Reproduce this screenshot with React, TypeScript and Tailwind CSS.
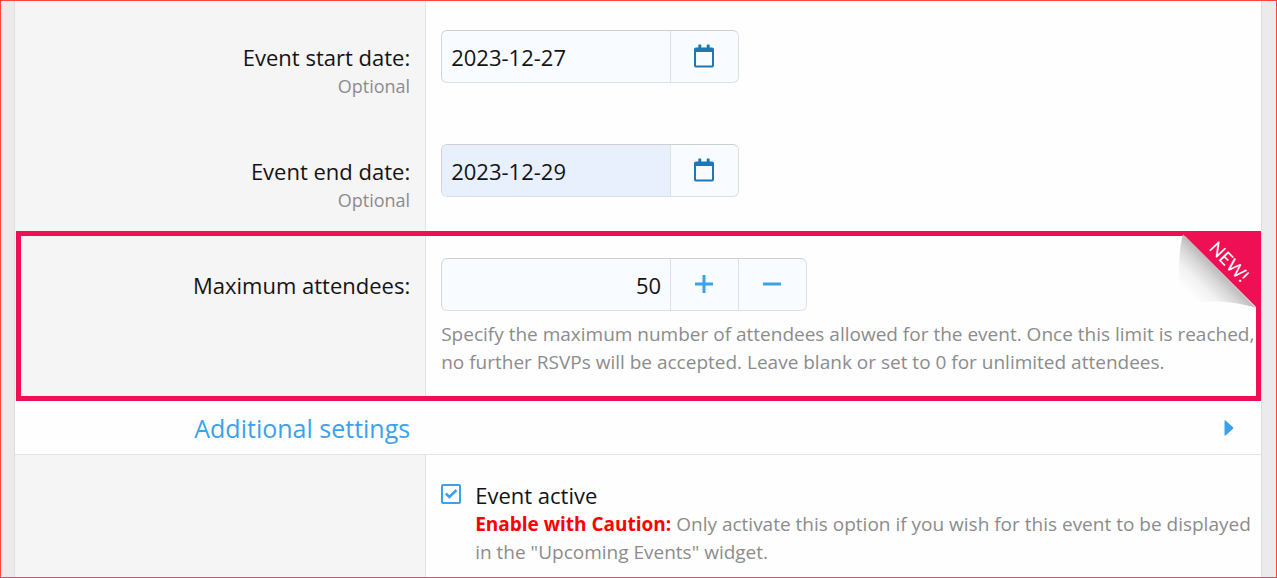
import React, { useState } from 'react';

interface FormRowProps {
  label?: string;
  htmlFor?: string;
  hint?: string;
  className?: string;
  children: React.ReactNode;
}

const FormRow: React.FC<FormRowProps> = ({ label, htmlFor, hint, className = 'pt-[29px]', children }) => (
  <div className="flex">
    <div className={`w-[33%] shrink-0 border-r border-[#e3e3e3] bg-[#f5f5f5] pr-[15px] text-right ${className}`}>
      {label && (
        <label htmlFor={htmlFor} className="mt-[13px] block text-[22px] leading-[28px] text-[#141414]">
          {label}
        </label>
      )}
      {hint && <div className="pt-px text-[18px] leading-[28px] text-[#8c8c8c]">{hint}</div>}
    </div>
    <div className={`min-w-0 flex-1 bg-[#fefefe] pl-[15px] ${className}`}>{children}</div>
  </div>
);

const CalendarIcon = () => (
  <svg className="h-6 w-5" viewBox="0 0 20 24" fill="none" aria-hidden="true">
    <path
      fill="#1f77b4"
      fillRule="evenodd"
      d="M4.300 1.200c0-.4.300-.7.700-.7h1.600c.4 0 .7.300.7.700V3.500h5.400V1.200c0-.4.300-.7.700-.7h1.600c.4 0 .7.300.7.700V3.500H18c1.200 0 2 .8 2 2V21.500c0 1.200-.8 2-2 2H2c-1.200 0-2-.8-2-2V5.500c0-1.200.8-2 2-2h2.300V1.200ZM2 8V21.500H18V8H2Z"
    />
  </svg>
);

const GROUP = 'flex h-[53px] overflow-hidden rounded-md border border-[#e0e0e0] border-t-[#cfcfcf] border-l-[#d6d6d6] bg-[#f8fbff]';
const GROUP_BUTTON = 'flex w-[68px] shrink-0 items-center justify-center border-l border-[#e0e0e0] pr-px pb-[2px]';

const DateField = ({ id, initial, filled = false }: { id: string; initial: string; filled?: boolean }) => {
  const [value, setValue] = useState(initial);
  return (
    <div className={`${GROUP} w-[298px]`}>
      <input
        id={id}
        type="text"
        value={value}
        onChange={(e) => setValue(e.target.value)}
        className={`min-w-0 flex-1 px-[9px] pt-[2px] text-[22px] text-[#141414] outline-none ${filled ? 'bg-[#e8f0fe]' : ''}`}
      />
      <button type="button" aria-label="Open calendar" className={GROUP_BUTTON}>
        <CalendarIcon />
      </button>
    </div>
  );
};

// Folded page corner with the red ribbon behind it
const NewCorner = () => (
  <svg className="absolute top-0 right-0 h-[78px] w-[84px]" viewBox="0 0 84 78" role="img" aria-label="New">
    <defs>
      <linearGradient id="curl" gradientUnits="userSpaceOnUse" x1="43" y1="39" x2="15" y2="67">
        <stop offset="0" stopColor="#b8b8b8" />
        <stop offset="0.25" stopColor="#d4d4d4" />
        <stop offset="0.6" stopColor="#f2f2f2" />
        <stop offset="1" stopColor="#fefefe" />
      </linearGradient>
    </defs>
    <path d="M6 3C2 19 0 42 4 74C32 68 58 70 79 77Z" fill="url(#curl)" />
    <path d="M5 0H84V76H79L6 3Z" fill="#ee0f55" />
    <text
      transform="translate(52 31) rotate(46)"
      textAnchor="middle"
      y="6"
      fontFamily="Lato, sans-serif"
      fontSize="18"
      fill="#fff"
    >
      NEW!
    </text>
  </svg>
);

const App: React.FC = () => {
  const [attendees, setAttendees] = useState(50);
  const [active, setActive] = useState(true);

  return (
    <div className="flex min-h-screen flex-col border border-[#ff4242] bg-[#ebebeb] pr-[14px] pl-[13px] font-['Open_Sans',sans-serif]">
      <div className="flex flex-1 flex-col border-x border-[#dedede]">
        <FormRow label="Event start date:" htmlFor="start" hint="Optional">
          <div className="pb-[32px]">
            <DateField id="start" initial="2023-12-27" />
          </div>
        </FormRow>
        <FormRow label="Event end date:" htmlFor="end" hint="Optional">
          <div className="pb-[34px]">
            <DateField id="end" initial="2023-12-29" filled />
          </div>
        </FormRow>

        <div className="relative">
          <FormRow label="Maximum attendees:" htmlFor="attendees" className="pt-[27px]">
            <div className={`${GROUP} w-[366px]`}>
              <input
                id="attendees"
                type="text"
                inputMode="numeric"
                value={attendees}
                onChange={(e) => setAttendees(Number(e.target.value) || 0)}
                className="min-w-0 flex-1 px-[9px] pt-[2px] text-right text-[22px] text-[#141414] outline-none"
              />
              <button type="button" aria-label="Increase" onClick={() => setAttendees(attendees + 1)} className={GROUP_BUTTON}>
                <svg className="h-[18px] w-[18px]" viewBox="0 0 18 18" aria-hidden="true">
                  <path d="M9 0V18M0 9H18" stroke="#3da1ea" strokeWidth="3" />
                </svg>
              </button>
              <button type="button" aria-label="Decrease" onClick={() => setAttendees(Math.max(0, attendees - 1))} className={GROUP_BUTTON}>
                <svg className="h-[18px] w-[18px]" viewBox="0 0 18 18" aria-hidden="true">
                  <path d="M0 9H18" stroke="#3da1ea" strokeWidth="3" />
                </svg>
              </button>
            </div>
            <p className="pt-[9px] pb-[25px] text-[19px] leading-[28px] text-[#8c8c8c]">
              Specify the maximum number of attendees allowed for the event. Once this limit is reached,
              <br />
              no further RSVPs will be accepted. Leave blank or set to 0 for unlimited attendees.
            </p>
          </FormRow>
          <div className="pointer-events-none absolute inset-y-0 right-0 left-px border-[5px] border-[#ee0f55]" />
          <NewCorner />
        </div>

        <button type="button" className="flex h-[54px] items-center border-b border-[#e3e3e3] bg-[#fefefe] text-[#3da1ea]">
          <span className="w-[33%] pr-4 text-right text-[25px] leading-[32px]">Additional settings</span>
          <svg className="mr-[27px] ml-auto h-4 w-[10px]" viewBox="0 0 10 16" aria-hidden="true">
            <path d="M0.500 1.200C0.500.3 1.200.1 1.800.700L9 7.200C9.500 7.700 9.500 8.300 9 8.800L1.800 15.300C1.200 15.900.5 15.700.5 14.800Z" fill="currentColor" />
          </svg>
        </button>

        <div className="flex flex-1 flex-col *:flex-1">
          <FormRow className="pt-[26px]">
            <div className="flex">
              <span className="relative mt-[3px] h-5 w-5 shrink-0">
                <input
                  id="active"
                  type="checkbox"
                  checked={active}
                  onChange={(e) => setActive(e.target.checked)}
                  className="block h-5 w-5 appearance-none rounded-xs border-2 border-[#3da1ea]"
                />
                {active && (
                  <svg className="pointer-events-none absolute inset-0 h-5 w-5" viewBox="0 0 20 20" fill="none" aria-hidden="true">
                    <path d="M4.800 9.500L8.400 13L15.500 6" stroke="#3da1ea" strokeWidth="2.600" />
                  </svg>
                )}
              </span>
              <div className="min-w-0 pl-[14px]">
                <label htmlFor="active" className="block text-[22px] leading-[28px] text-[#141414]">
                  Event active
                </label>
                <p className="pt-px text-[19px] leading-[28px] text-[#8c8c8c]">
                  <strong className="font-bold text-[#ff0000]">Enable with Caution:</strong> Only activate this option if you wish for this event to be displayed
                  <br />
                  in the "Upcoming Events" widget.
                </p>
              </div>
            </div>
          </FormRow>
        </div>
      </div>
    </div>
  );
};

export default App;
